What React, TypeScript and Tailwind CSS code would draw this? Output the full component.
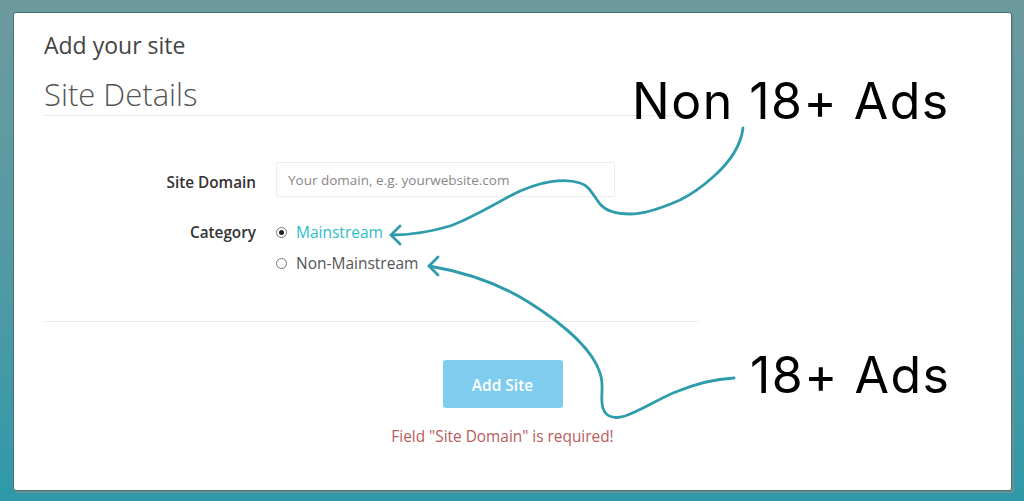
const openSans = "font-['Open_Sans',sans-serif]";

function Arrows() {
  return (
    <svg className="absolute inset-0 h-[501px] w-[1024px] pointer-events-none" viewBox="0 0 1024 501" fill="none" stroke="#2f9cab" strokeWidth="2.8" strokeLinecap="round" strokeLinejoin="round">
      <path d="M743 128C741 145 730 162 713 177C702 187 692 194 680 200C662 208 645 214 630 214C615 214 606 211 600 204C592 194 590 186 580 183C566 178 540 180 510 196C485 210 465 221 450 226C430 232 412 235 391 235" />
      <path d="M400 226L391 235L400 244" />
      <path d="M734 378C712 379 692 385 673 393C655 401 640 411 625 416C612 420 603 416 602 403C601 392 604 384 600 373C592 348 560 322 530 303C500 284 465 272 429 266" />
      <path d="M438 257L429 266L438 275" />
    </svg>
  );
}

export default function App() {
  return (
    <div className="relative h-[501px] w-[1024px] overflow-hidden bg-gradient-to-b from-[#6d9a9f] to-[#2e99a9] pt-3 pl-[13px]">
      <div className={`h-[479px] w-[999px] rounded-[3px] border border-[#3f7376] bg-white pl-[30px] pt-[14px] shadow-[2px_2px_0_#6a8f90] ${openSans}`}>
        <div className="w-[655px]">
          <h1 className="text-[23px] leading-[36px] text-[#444]">Add your site</h1>
          <h2 className="mt-[3px] h-[50px] border-b border-[#eaeaea] text-[31px] font-light leading-[56px] text-[#555]">Site Details</h2>
          <div className="mt-[46px] flex items-center">
            <label className="w-[232px] pr-5 pt-[5px] text-right text-[15.3px] font-semibold text-[#333]">Site Domain</label>
            <input
              readOnly
              placeholder="Your domain, e.g. yourwebsite.com"
              className="h-[35px] w-[339px] rounded-[2px] border border-[#ececec] px-[11px] text-[13.5px] outline-none placeholder:text-[#888]"
            />
          </div>
          <div className="mt-[19px] flex">
            <label className="w-[232px] pr-5 text-right text-[15.3px] font-semibold leading-[32px] text-[#333]">Category</label>
            <div className="flex flex-col pt-px">
              <div className="flex h-[32px] items-center gap-[9px]">
                <span className="mb-[2px] flex h-[11px] w-[11px] items-center justify-center rounded-full border border-[#777]">
                  <span className="h-[5px] w-[5px] rounded-full bg-[#222]" />
                </span>
                <span className="text-[15.5px] text-[#2cc0c6]">Mainstream</span>
              </div>
              <div className="flex h-[30px] items-center gap-[9px]">
                <span className="mb-[2px] h-[11px] w-[11px] rounded-full border border-[#777]" />
                <span className="text-[15.5px] text-[#555]">Non-Mainstream</span>
              </div>
            </div>
          </div>
          <div className="mt-[42px] border-t border-[#eaeaea]" />
          <div className="mt-[38px] flex flex-col items-center pl-[262px]">
            <button className="h-[48px] w-[120px] rounded-[3px] bg-[#7eccee] pt-[3px] text-[15.5px] font-semibold text-white">Add Site</button>
            <p className="mt-[19px] text-[15.4px] leading-[20px] text-[#b85c5c]">Field "Site Domain" is required!</p>
          </div>
        </div>
      </div>
      <Arrows />
      <span className="absolute left-[632px] top-[71px] font-['Inter',sans-serif] text-[50px] font-normal leading-[60px] tracking-[1.5px] text-black">Non 18+ Ads</span>
      <span className="absolute left-[750px] top-[345px] font-['Inter',sans-serif] text-[50px] font-normal leading-[60px] tracking-[1.5px] text-black">18+ Ads</span>
    </div>
  );
}
